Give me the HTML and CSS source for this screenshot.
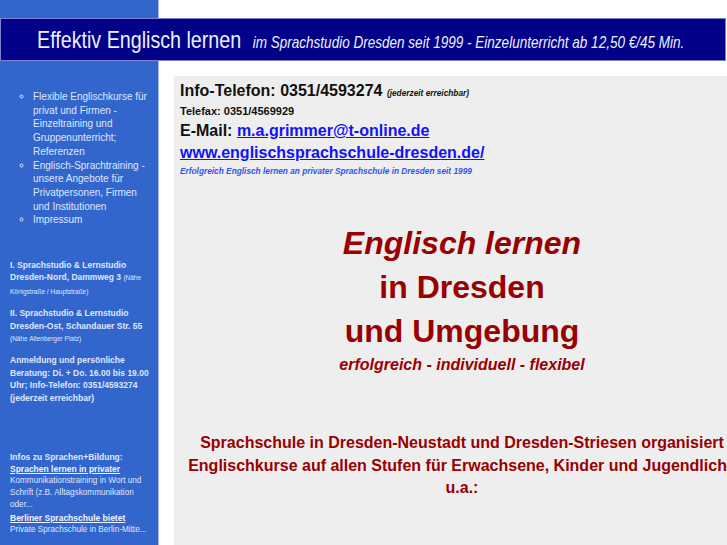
FILE: index.html
```html
<!DOCTYPE html>
<html lang="de">
<head>
<meta charset="utf-8">
<title>Effektiv Englisch lernen</title>
<link rel="stylesheet" href="styles.css">
</head>
<body>
<header class="banner">
  <span class="banner-text">
    <span class="banner-title">Effektiv Englisch lernen</span>
    <span class="banner-sub">im Sprachstudio Dresden seit 1999 - Einzelunterricht ab 12,50 €/45 Min.</span>
  </span>
</header>
<div class="layout">
  <nav class="sidebar">
    <ul class="menu">
      <li>Flexible Englischkurse für privat und Firmen - Einzeltraining und Gruppenunterricht; Referenzen</li>
      <li>Englisch-Sprachtraining - unsere Angebote für Privatpersonen, Firmen und Institutionen</li>
      <li>Impressum</li>
    </ul>
    <p class="addr addr-first">I. Sprachstudio &amp; Lernstudio Dresden-Nord, Dammweg 3 <span class="small">(Nähe Königstraße / Hauptstraße)</span></p>
    <p class="addr">II. Sprachstudio &amp; Lernstudio Dresden-Ost, Schandauer Str. 55 <span class="small">(Nähe Altenberger Platz)</span></p>
    <p class="addr">Anmeldung und persönliche Beratung: Di. + Do. 16.00 bis 19.00 Uhr; Info-Telefon: 0351/4593274 (jederzeit erreichbar)</p>
    <div class="infos">
      <div class="infos-title">Infos zu Sprachen+Bildung:</div>
      <a class="infos-link" href="#">Sprachen lernen in privater</a>
      <div class="infos-text">Kommunikationstraining in Wort und Schrift (z.B. Alltagskommunikation oder...</div>
      <a class="infos-link" href="#">Berliner Sprachschule bietet</a>
      <div class="infos-text">Private Sprachschule in Berlin-Mitte...</div>
    </div>
  </nav>
  <main class="content">
    <div class="contact">
      <div class="tel">Info-Telefon: 0351/4593274 <span class="tel-note">(jederzeit erreichbar)</span></div>
      <div class="fax">Telefax: 0351/4569929</div>
      <div class="mail">E-Mail: <a href="#">m.a.grimmer@t-online.de</a></div>
      <div class="web"><a href="#">www.englischsprachschule-dresden.de/</a></div>
      <div class="slogan">Erfolgreich Englisch lernen an privater Sprachschule in Dresden seit 1999</div>
    </div>
    <h1 class="headline"><em>Englisch lernen</em><br>in Dresden<br>und Umgebung</h1>
    <div class="tagline">erfolgreich - individuell - flexibel</div>
    <p class="intro">Sprachschule in Dresden-Neustadt und Dresden-Striesen organisiert Englischkurse auf allen Stufen für Erwachsene, Kinder und Jugendliche u.a.:</p>
  </main>
</div>
</body>
</html>
```

FILE: styles.css
```css
html {
  overflow: hidden;
}

body {
  margin: 0;
  min-height: 545px;
  font-family: "Liberation Sans", Arial, sans-serif;
  background: linear-gradient(to right, #3366cc 0, #3366cc 158px, #a9bcf0 158px, #a9bcf0 159px, #ffffff 159px);
}

.banner {
  box-sizing: border-box;
  width: 726px;
  height: 43px;
  margin-top: 18px;
  padding-left: 36px;
  border: 1px solid #8080d0;
  background: #000088;
  color: #eef0ff;
  display: flex;
  align-items: center;
  white-space: nowrap;
  overflow: hidden;
}

.banner-text {
  display: flex;
  align-items: baseline;
  gap: 14px;
  transform: scaleX(0.82);
  transform-origin: left center;
}

.banner-title {
  font-size: 24px;
}

.banner-sub {
  font-size: 16.5px;
  font-style: italic;
}

.layout {
  display: grid;
  grid-template-columns: 174px 576px;
  margin-top: 15px;
}

.sidebar {
  color: #dfe6ff;
  padding-top: 14px;
}

.menu {
  margin: 0;
  padding-left: 33px;
  list-style: circle;
  font-size: 10px;
  line-height: 13.7px;
  width: 118px;
}

.addr {
  margin: 0 0 9px;
  padding-left: 10px;
  width: 150px;
  font-size: 8.5px;
  font-weight: bold;
  line-height: 12.4px;
}

.addr-first {
  margin-top: 32px;
}

.small {
  font-size: 6.5px;
  font-weight: normal;
}

.infos {
  margin-top: 47px;
  padding-left: 10px;
  font-size: 8.5px;
  line-height: 12.1px;
}

.infos-title {
  font-weight: bold;
}

.infos-link {
  display: block;
  color: #eef2ff;
  font-weight: bold;
  text-decoration: underline;
}

.infos-text {
  font-size: 8.2px;
  width: 140px;
}

.content {
  background: #eeeeee;
  padding: 6px 6px 0;
  min-height: 480px;
}

.contact {
  font-weight: bold;
  color: #111111;
}

.tel {
  font-size: 16px;
  line-height: 18px;
}

.tel-note {
  font-size: 8.3px;
  font-style: italic;
}

.fax {
  font-size: 11px;
  line-height: 18px;
}

.mail,
.web {
  font-size: 16px;
  line-height: 22px;
}

.mail a,
.web a {
  color: #1111ff;
  text-decoration: underline;
}

.slogan {
  font-size: 8.3px;
  line-height: 14px;
  font-style: italic;
  color: #2f55ee;
}

.headline {
  margin: 43px 0 0;
  text-align: center;
  font-size: 32px;
  line-height: 44px;
  font-weight: bold;
  color: #990000;
}

.tagline {
  margin-top: 1px;
  text-align: center;
  font-size: 16px;
  line-height: 22px;
  font-weight: bold;
  font-style: italic;
  color: #990000;
}

.intro {
  margin: 56px 0 0;
  text-align: center;
  font-size: 16px;
  line-height: 22.5px;
  font-weight: bold;
  color: #990000;
}
```
